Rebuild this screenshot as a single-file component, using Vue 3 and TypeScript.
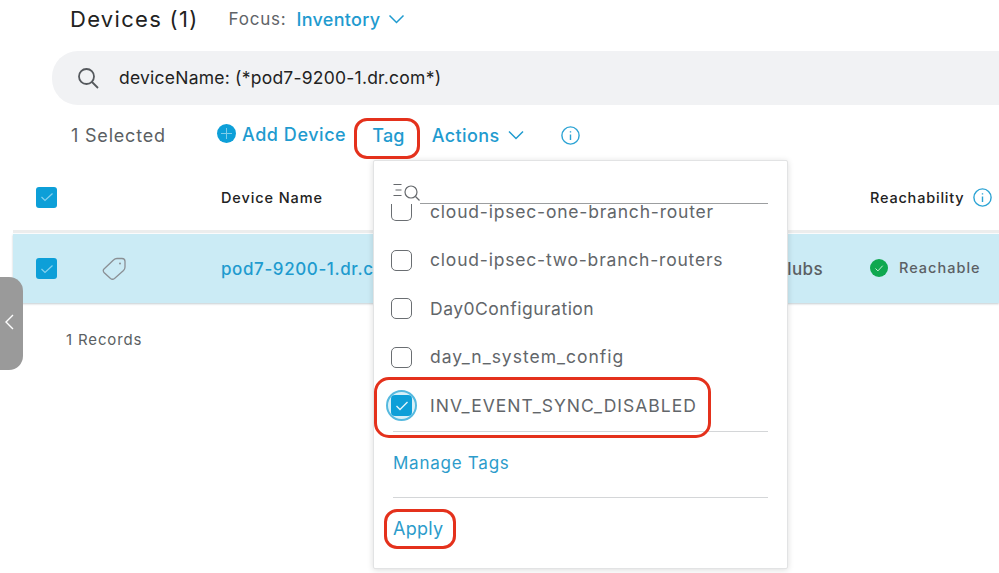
<script setup lang="ts">
const tags = [
  { name: 'cloud-ipsec-two-branch-routers' },
  { name: 'Day0Configuration' },
  { name: 'day_n_system_config' },
]
</script>

<template>
  <div class="page">
    <header class="head">
      <h1 class="title">Devices (1)</h1>
      <span class="focus">Focus:</span>
      <span class="inv">Inventory</span>
      <svg class="chev" width="17" height="10" viewBox="0 0 17 10"><path d="M1.5 1.5 8.5 8.5 15.5 1.5" /></svg>
    </header>

    <div class="search">
      <svg width="24" height="24" viewBox="0 0 24 24" class="mag"><circle cx="10.5" cy="10.5" r="7.5" /><path d="M16 16l6 6" /></svg>
      <span class="query">deviceName: (*pod7-9200-1.dr.com*)</span>
    </div>

    <div class="tools">
      <span class="selected">1 Selected</span>
      <svg class="plus" width="19" height="19" viewBox="0 0 19 19"><circle cx="9.5" cy="9.5" r="9.5" fill="#0d9fd8" /><path d="M9.5 4v11M4 9.5h11" stroke="#7fcdea" stroke-width="1" /></svg>
      <span class="link add">Add Device</span>
      <span class="link tag">Tag</span>
      <span class="link actions">Actions</span>
      <svg class="chev chev2" width="16" height="10" viewBox="0 0 16 10"><path d="M1 1.5 8 8.5 15 1.5" /></svg>
      <svg class="info" width="19" height="19" viewBox="0 0 19 19"><circle cx="9.5" cy="9.5" r="8.6" /><path d="M9.5 8.5v5.5M9.5 5.2v1.4" /></svg>
    </div>

    <div class="thead">
      <span class="box"><svg width="22" height="22" viewBox="0 0 22 22"><path d="M5.5 11l3.500 3.500L16.500 7.500" /></svg></span>
      <span class="th-name">Device Name</span>
      <span class="th-reach">Reachability</span>
      <svg class="info info2" width="19" height="19" viewBox="0 0 19 19"><circle cx="9.5" cy="9.5" r="8.6" /><path d="M9.5 8.5v5.5M9.5 5.2v1.4" /></svg>
    </div>

    <div class="row">
      <span class="box"><svg width="22" height="22" viewBox="0 0 22 22"><path d="M5.5 11l3.500 3.500L16.500 7.500" /></svg></span>
      <svg class="tagicon" width="24" height="24" viewBox="0 0 24 24"><path d="M15 1.500H20Q23 1.500 23 4.500V10Q23 12 21.500 13.500L12.500 21.500Q10.500 23 8.500 21.500L2 15.500Q.5 13.500 2 12L11.500 3Q13 1.500 15 1.500Z" /><circle cx="18" cy="6.500" r="1" fill="#8a8f94" stroke="none" /></svg>
      <span class="device">pod7-9200-1.dr.com</span>
      <span class="clubs">Clubs</span>
      <svg class="ok" width="18" height="18" viewBox="0 0 18 18"><circle cx="9" cy="9" r="9" fill="#0fa84f" /><path d="M5.5 9.5l2.400 2.400 4.800-5.200" fill="none" stroke="#c8f0d6" stroke-width="1" /></svg>
      <span class="reach">Reachable</span>
    </div>

    <div class="records">1 Records</div>

    <div class="handle">
      <svg width="10" height="16" viewBox="0 0 10 16"><path d="M9 1 2 8l7 7" /></svg>
    </div>

    <div class="menu">
      <div class="filter">
        <svg width="27" height="19" viewBox="0 0 27 19"><path d="M0.5 2.500h8M2.500 8h6M0.500 13.500h8" /><circle cx="18" cy="10" r="6" /><path d="M22.500 14.500l4 4" /></svg>
        <span class="fline"></span>
      </div>
      <div class="list">
        <div class="clipped">
          <span class="cbox cut"></span>
          <span class="tagname">cloud-ipsec-one-branch-router</span>
        </div>
        <div v-for="t in tags" :key="t.name" class="item">
          <span class="cbox"></span>
          <span class="tagname">{{ t.name }}</span>
        </div>
        <div class="item">
          <span class="ring"><span class="box small"><svg width="18" height="18" viewBox="0 0 18 18"><path d="M3.500 9l3.500 3.500 7.500-7.500" /></svg></span></span>
          <span class="tagname">INV_EVENT_SYNC_DISABLED</span>
        </div>
      </div>
      <div class="rule"></div>
      <div class="manage">Manage Tags</div>
      <div class="rule"></div>
      <div class="apply">Apply</div>
    </div>

    <span class="mark m-tag"></span>
    <span class="mark m-inv"></span>
    <span class="mark m-apply"></span>
  </div>
</template>

<style>
html, body { margin: 0; background: #fff; }
</style>

<style scoped>
.page {
  position: relative;
  width: 999px;
  height: 573px;
  overflow: hidden;
  background: #fff;
  font-family: Inter, "Noto Sans", sans-serif;
  color: #5b5f63;
}
svg { display: block; fill: none; flex: none; }
.head {
  display: flex;
  align-items: center;
  height: 38px;
  padding-left: 70px;
}
.title {
  margin: 0;
  font-size: 22px;
  font-weight: 400;
  color: #222;
  letter-spacing: 1.3px;
  white-space: nowrap;
}
.focus { margin-left: 30px; font-size: 17px; letter-spacing: 0.8px; color: #606468; }
.inv { margin-left: 10px; font-size: 18px; font-weight: 500; color: #1f9bcf; letter-spacing: 0.3px; }
.chev path { stroke: #1f9bcf; stroke-width: 1.5; fill: none; }
.head .chev { margin-left: 8px; }
.search {
  display: flex;
  align-items: center;
  height: 54px;
  margin: 13px 0 0 52px;
  padding-left: 24px;
  background: #f1f2f4;
  border-radius: 26px 0 0 26px;
}
.mag circle, .mag path { stroke: #55595d; stroke-width: 1.8; }
.query { margin: -1px 0 0 19px; font-size: 17.5px; color: #222; letter-spacing: 0.23px; white-space: nowrap; }
.tools {
  display: flex;
  align-items: center;
  height: 60px;
  padding-left: 71px;
}
.selected { font-size: 18px; letter-spacing: 0.8px; color: #5b5f63; width: 146px; flex: none; white-space: nowrap; }
.plus { margin-top: -3px; }
.link { font-size: 18px; font-weight: 500; color: #1f9bcf; white-space: nowrap; }
.add { margin: -2px 0 0 6px; letter-spacing: 0.55px; }
.tag { margin: 1px 0 0 26px; letter-spacing: 0.2px; }
.actions { margin: 1px 0 0 27px; letter-spacing: 0.4px; }
.chev2 { margin-left: 8px; }
.info circle, .info path { stroke: #2ba3d4; stroke-width: 1.4; }
.tools .info { margin-left: 37px; }
.thead {
  display: flex;
  align-items: center;
  height: 66px;
  margin: -1px 0 0 13px;
  padding-left: 23px;
  border-bottom: 3px solid #eceded;
}
.box {
  display: flex;
  align-items: center;
  justify-content: center;
  width: 21px;
  height: 21px;
  border-radius: 3px;
  background: #0d9fd8;
  flex: none;
}
.box path { stroke: #86d2ee; stroke-width: 1.2; fill: none; }
.th-name { margin-left: 164px; font-size: 14.5px; font-weight: 500; color: #222; letter-spacing: 0.9px; white-space: nowrap; }
.th-reach { margin-left: 547px; font-size: 14.5px; font-weight: 500; color: #222; letter-spacing: 0.8px; white-space: nowrap; }
.info2 { margin-left: 9px; }
.row {
  display: flex;
  align-items: center;
  height: 69px;
  margin: 1px 0 0 13px;
  padding-left: 23px;
  background: #cbebf5;
  box-shadow: 0 1px 2px rgba(80, 110, 120, 0.35);
}
.tagicon { margin-left: 45px; }
.tagicon path { stroke: #8a8f94; stroke-width: 1.3; }
.device { margin-left: 95px; font-size: 17px; font-weight: 500; color: #1f9bcf; letter-spacing: 0.6px; width: 200px; flex: none; white-space: nowrap; }
.clubs { margin-left: 327px; font-size: 17px; font-weight: 500; color: #5b5f63; width: 75px; flex: none; letter-spacing: 0.4px; text-align: right; }
.ok { margin: -2px 0 0 47px; }
.reach { margin: -2px 0 0 11px; font-size: 14.5px; font-weight: 500; color: #5b6064; letter-spacing: 1px; white-space: nowrap; }
.records {
  margin: 27px 0 0 66px;
  font-size: 15px;
  letter-spacing: 0.85px;
  color: #5b5f63;
}
.handle {
  position: absolute;
  left: 0;
  top: 277px;
  width: 23px;
  height: 93px;
  display: flex;
  align-items: center;
  padding: 0 0 4px 4px;
  box-sizing: border-box;
  background: #9a9a9a;
  border-radius: 0 14px 14px 0;
}
.handle path { stroke: #fff; stroke-width: 1.4; }
.menu {
  position: absolute;
  left: 373px;
  top: 160px;
  width: 415px;
  height: 409px;
  box-sizing: border-box;
  background: #fff;
  border: 1px solid #e2e3e4;
  box-shadow: 0 1px 6px rgba(0, 0, 0, 0.14);
  border-radius: 2px;
  padding: 0 19px;
}
.filter {
  display: flex;
  align-items: flex-end;
  height: 43px;
}
.filter svg { margin-bottom: 3px; }
.filter circle, .filter path { stroke: #66696d; stroke-width: 1.2; }
.fline { flex: 1; height: 1px; background: #9c9ea0; }
.list { display: flex; flex-direction: column; }
.clipped {
  display: flex;
  align-items: flex-start;
  height: 17px;
  margin-left: -2px;
}
.tagname {
  margin: -1px 0 0 18px;
  font-size: 17.5px;
  line-height: 17px;
  letter-spacing: 0.8px;
  color: #62666a;
  white-space: nowrap;
}
.item {
  display: flex;
  align-items: center;
  height: 48.5px;
  margin-left: -2px;
}
.item:nth-child(3) .tagname { letter-spacing: 0.5px; }
.item:nth-child(4) .tagname { letter-spacing: 1px; }
.item:nth-child(5) .tagname { letter-spacing: 1px; }
.clipped + .item { margin-top: 14.75px; }
.cbox {
  box-sizing: border-box;
  width: 21px;
  height: 21px;
  border: 1.5px solid #6a6e72;
  border-radius: 5px;
  flex: none;
}
.cbox.cut {
  height: 17px;
  border-top: none;
  border-radius: 0 0 5px 5px;
}
.ring {
  display: flex;
  align-items: center;
  justify-content: center;
  width: 31px;
  height: 31px;
  margin: 0 -5px;
  border-radius: 50%;
  background: #d8f0f8;
  border: 2px solid #55b9df;
  box-sizing: border-box;
  flex: none;
}
.box.small { width: 21px; height: 21px; border-radius: 4px; }
.box.small path { stroke: #e2f5fb; stroke-width: 1.4; }
.rule { height: 1px; background: #d4d6d8; }
.list + .rule { margin-top: 1px; }
.manage {
  height: 65px;
  line-height: 63px;
  font-size: 17px;
  color: #2c9ccb;
  letter-spacing: 0.75px;
}
.apply {
  margin-top: 18px;
  font-size: 18px;
  color: #2c9ccb;
  letter-spacing: 0.3px;
  line-height: 26px;
}
.mark {
  position: absolute;
  box-sizing: border-box;
  border: 3px solid #e4311c;
  pointer-events: none;
}
.m-tag { left: 354px; top: 118px; width: 66px; height: 41px; border-radius: 13px; }
.m-inv { left: 374px; top: 377px; width: 337px; height: 61px; border-radius: 15px; }
.m-apply { left: 384px; top: 509px; width: 72px; height: 40px; border-radius: 13px; }
</style>
